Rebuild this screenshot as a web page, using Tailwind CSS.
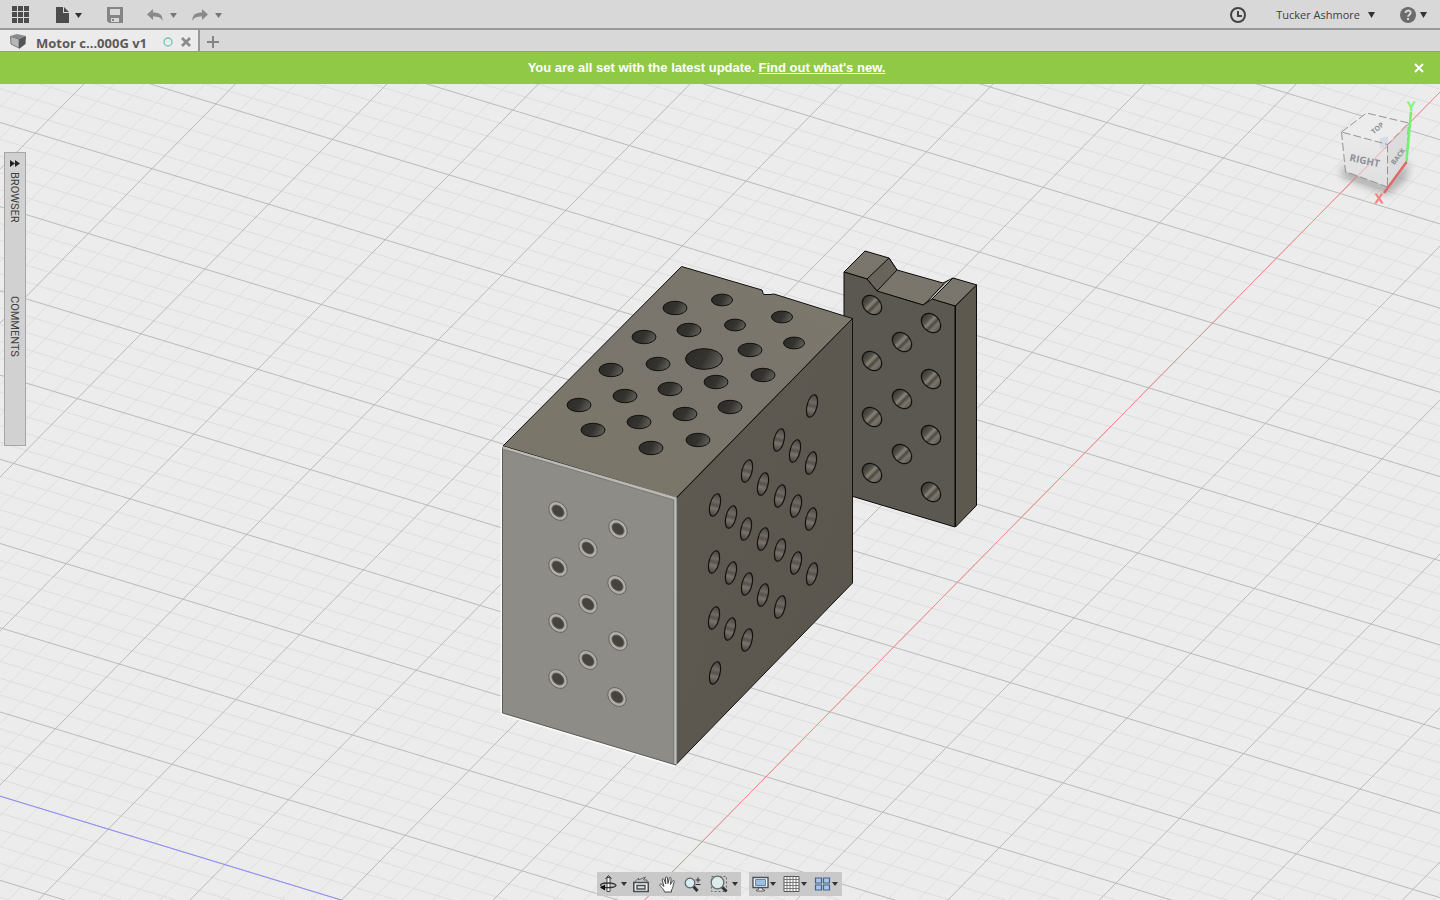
<!DOCTYPE html>
<html lang="en">
<head>
<meta charset="utf-8">
<meta name="viewport" content="width=device-width, initial-scale=1">
<title>Motor c...000G v1</title>
<script src="https://cdn.jsdelivr.net/npm/@tailwindcss/browser@4"></script>
</head>
<body class="flex h-screen flex-col overflow-hidden bg-[#ececec] font-['Open_Sans','Noto_Sans',sans-serif] text-[#404040]">

<header class="flex h-[30px] shrink-0 items-center border-b-2 border-[#999] bg-[#d8d8d8] pl-3 pr-[13px] pt-0.5">
  <button aria-label="Data panel" class="block">
    <svg width="18" height="18" fill="#4c4c4c"><path d="M0 0h5v5H0zM6 0h5v5H6zM12 0h5v5h-5zM0 6h5v5H0zM6 6h5v5H6zM12 6h5v5h-5zM0 12h5v5H0zM6 12h5v5H6zM12 12h5v5h-5z"/></svg>
  </button>
  <button aria-label="File" class="ml-[26px] flex items-center gap-[5px]">
    <svg width="14" height="16" fill="#4c4c4c"><path d="M0 0h7v6h6v10H0zM8 0l5 5H8z"/></svg>
    <svg width="7" height="5" fill="#333"><path d="M0 0h7L3.500 5z"/></svg>
  </button>
  <button aria-label="Save" class="ml-[25px] block">
    <svg width="16" height="16"><path fill="#858585" fill-rule="evenodd" d="M0 0h16v16H2l-2-2zM3 2v6h10V2zM4 11v4h8v-4z"/><path fill="#858585" d="M5 12h2v2H5z"/></svg>
  </button>
  <button aria-label="Undo" class="ml-6 flex items-center gap-[7px]">
    <svg width="16" height="12" fill="#8a8a8a"><path d="M0 5.500L6 0v3.500c6 0 10 2 9.500 8.500C14 8.500 11.500 7.500 6 7.500V11z"/></svg>
    <svg width="7" height="5" fill="#777"><path d="M0 0h7L3.500 5z"/></svg>
  </button>
  <button aria-label="Redo" class="ml-[15px] flex items-center gap-[7px]">
    <svg width="16" height="12" fill="#8a8a8a"><path d="M16 5.500L10 0v3.500C4 3.500 0 5.500.5 12 2 8.500 4.500 7.500 10 7.500V11z"/></svg>
    <svg width="7" height="5" fill="#777"><path d="M0 0h7L3.500 5z"/></svg>
  </button>
  <div class="flex-1"></div>
  <button aria-label="Job status" class="block">
    <svg width="16" height="16" fill="none" stroke="#444" stroke-width="2"><circle cx="8" cy="8" r="7"/><path d="M8 4v5h4"/></svg>
  </button>
  <button class="ml-[30px] flex items-center gap-[8px] whitespace-nowrap text-[11px] leading-4">Tucker Ashmore
    <svg width="7" height="6" fill="#333"><path d="M0 0h7L3.500 6z"/></svg>
  </button>
  <button aria-label="Help" class="ml-[25px] flex items-center gap-1">
    <svg width="16" height="16"><circle cx="8" cy="8" r="8" fill="#6c6c6c"/><path d="M5.500 6c0-3.300 5.200-3.200 5.200-.3 0 2-2.600 2-2.600 4.100" fill="none" stroke="#dcdcdc" stroke-width="1.800"/><path d="M7 11h2v2H7z" fill="#dcdcdc"/></svg>
    <svg width="7" height="6" fill="#333"><path d="M0 0h7L3.500 6z"/></svg>
  </button>
</header>

<nav aria-label="Documents" class="flex h-[22px] shrink-0 border-b border-[#999] bg-[#d8d8d8]">
  <div class="flex items-center border-r-2 border-[#999] bg-[#ebebeb] pl-[9px] pr-[7px] pt-0.5">
    <button class="flex items-center gap-[9px] whitespace-nowrap text-[13px] leading-4 font-bold text-[#5a5a5a]">
      <svg width="18" height="18"><path fill="#8b8b8b" d="M1 3l7-2 9 2-7 3z"/><path fill="#b4b8bb" stroke="#777" d="M1.500 3.500L10 6v9l-8-4z"/><path fill="#555" d="M10 6l7-3-.5 8L10 16z"/></svg>
      <span class="pt-[2px]">Motor c...000G v1</span>
    </button>
    <svg width="34" height="12" aria-hidden="true"><circle cx="21" cy="6" r="4" fill="none" stroke="#72c6b2" stroke-width="1.300"/></svg>
    <button aria-label="Close tab" class="block"><svg width="10" height="10" stroke="#8a8a8a" stroke-width="2.600"><path d="M1 1l8 8M9 1l-8 8"/></svg></button>
  </div>
  <button aria-label="New tab" class="flex w-[26px] items-center justify-center pt-0.5"><svg width="12" height="12" stroke="#848484" stroke-width="2"><path d="M6 0v12M0 6h12"/></svg></button>
</nav>

<div role="status" class="flex h-8 shrink-0 items-center bg-[#8fc945] font-['Liberation_Sans',sans-serif] text-[13px] font-bold text-white">
  <p class="flex-1 text-center">You are all set with the latest update. <a href="#" class="underline">Find out what's new.</a></p>
  <button aria-label="Dismiss" class="w-[27px]"><svg class="ml-px" width="10" height="10" stroke="#fff" stroke-width="2"><path d="M1 1l8 8M9 1l-8 8"/></svg></button>
</div>

<main class="relative min-h-0 flex-1 overflow-hidden">
  <svg class="block h-full w-full" viewBox="0 84 1440 816" preserveAspectRatio="xMidYMid slice" role="img" aria-label="3D model view">
    <defs>
      <linearGradient id="top" x1="0" y1="1" x2="1" y2="0"><stop offset="0" stop-color="#7a756a"/><stop offset=".3" stop-color="#7b766a"/><stop offset=".55" stop-color="#7a756d"/><stop offset="1" stop-color="#7c786b"/></linearGradient>
      <linearGradient id="side" x1="0" y1="0" x2="1" y2="1"><stop offset="0" stop-color="#5e5a51"/><stop offset="1" stop-color="#5a564e"/></linearGradient>
      <linearGradient id="pit" x1="0" y1="0" x2="1" y2=".3"><stop offset="0" stop-color="#2b2a27"/><stop offset=".6" stop-color="#34332f"/><stop offset="1" stop-color="#5a5953"/></linearGradient>
      <linearGradient id="slot" x1="0" y1="0" x2="0" y2="1"><stop offset="0" stop-color="#4a4740"/><stop offset=".35" stop-color="#6f6a62"/><stop offset=".5" stop-color="#57534c"/><stop offset=".65" stop-color="#79736b"/><stop offset="1" stop-color="#45423c"/></linearGradient>
      <linearGradient id="bore" x1="0" y1="0" x2="1" y2="0"><stop offset="0" stop-color="#3b3934"/><stop offset=".3" stop-color="#55524b"/><stop offset=".45" stop-color="#8a8378"/><stop offset=".6" stop-color="#4c4943"/><stop offset=".75" stop-color="#7b766c"/><stop offset="1" stop-color="#5c5850"/></linearGradient>
      <linearGradient id="cube" x1="0" y1="0" x2="0" y2="1"><stop offset="0" stop-color="#ebebec"/><stop offset="1" stop-color="#dededf"/></linearGradient>
      <filter id="soft" x="-30%" y="-30%" width="160%" height="160%"><feGaussianBlur stdDeviation="4"/></filter>
    </defs>

    <g id="minor" stroke="#dedede"></g>
    <g id="major" stroke="#bababa"></g>
    <path id="zaxis" stroke="#8e8eff" fill="none"/>
    <path id="xaxis" stroke="#f98a8a" fill="none"/>

    <!-- rear plate -->
    <g stroke="#0b0b0a" stroke-linejoin="round">
      <path fill="url(#top)" d="M844 272l21-21 24 7 8 12 46 13 10-5 24 7-22 21-24-7-8 6-47-14-9-12z"/>
      <path fill="#68645b" d="M867 279l22-21 8 12-20 21z"/>
      <path fill="#c5c7c2" stroke="none" d="M924 305l22-22 7-5-21 21z"/>
      <path fill="none" d="M924 305l20-21.500M932 299l21-21"/>
      <path fill="#5a5851" d="M844 272l23 7 10 12 46 14 9-6 23 7v221l-102-30.500-9-3z"/>
      <path fill="#5d594f" d="M955.500 306L976.500 285v220.500l-21 21.500z"/>
    </g>
    <g id="plateHoles" fill="url(#bore)" stroke="#11110f" stroke-width="1.200"></g>

    <!-- main block -->
    <path fill="url(#top)" stroke="#11110f" d="M503 446L681.500 266.500 762 290l1.500 4.500H770l4-.5 78.500 24.500L676 498z"/>
    <path fill="url(#side)" stroke="#11110f" d="M676.500 498L852.500 318.500V583L676.500 764z"/>
    <path fill="none" stroke="#fafafa" stroke-width="2" d="M501.500 447v267L675 766"/>
    <path fill="#8d8c87" stroke="#5d5c58" d="M502.500 447.500L676 498.500V765L502.500 713z"/>
    <path fill="none" stroke="#b9b9b6" stroke-width="2.500" d="M503 447.500L675.500 498.500V764"/>
    <path fill="none" stroke="#777671" stroke-width=".7" d="M504 449.500L673.500 500V763"/>
    <g id="topHoles" fill="url(#pit)" stroke="#11110f"></g>
    <g id="sideHoles" fill="url(#slot)" stroke="#11110f" stroke-width="1.200"></g>
    <g id="frontHoles"></g>

    <!-- view cube -->
    <g>
      <path d="M1343 166l44 20 22-26-3 18-18 16-46-18z" fill="#777" opacity=".65" filter="url(#soft)"/>
      <path fill="#ececed" d="M1341.500 132l25-19 42 10-21 21.500z"/>
      <path fill="url(#cube)" d="M1341.500 132l46 12.500V187l-42-15.500z"/>
      <path fill="#dcdcde" d="M1387.500 144.500l21-21.500-2 39-19 25z"/>
      <path fill="#d8dae4" d="M1380 138l8-1.500v13.500l-8-2z"/>
      <path fill="none" stroke="#939393" stroke-dasharray="8 3" d="M1341.500 132l25-19 42 10-21 21.500zM1341.500 132l4 39.500 42 15.500 19-25 2-39M1387.500 144.500V187"/>
      <g font-family="Open Sans, sans-serif" font-weight="700" fill="#8d9095" text-anchor="middle">
        <text font-size="10" transform="translate(1364 164) rotate(12)">RIGHT</text>
        <text font-size="7" transform="translate(1400 158) rotate(-52)">BACK</text>
        <text font-size="7" transform="translate(1379 130) rotate(-40)">TOP</text>
      </g>
      <path stroke="#fa8c8c" stroke-opacity=".7" d="M1341.500 192.400L1409 123.500"/>
      <path stroke="#e06a6a" stroke-width="2.500" d="M1406.500 162L1384 193"/>
      <path stroke="#6ff46c" stroke-width="2.500" d="M1406.500 161L1411 112"/>
      <g font-family="Liberation Sans, sans-serif" font-size="12" text-anchor="middle" stroke-width="1">
        <text x="1411" y="111" fill="#80f57e" stroke="#80f57e">Y</text>
        <text x="1379" y="203" fill="#f68484" stroke="#f68484">X</text>
      </g>
    </g>
  </svg>

  <!-- collapsed side palette -->
  <aside class="absolute left-1 top-[68px] flex h-[294px] w-[22px] flex-col items-center border border-[#a6a6a6] bg-[#d1d1d1] font-['Roboto',sans-serif] text-[11px] leading-[18px]">
    <button aria-label="Expand" class="mt-[7px] block"><svg width="10" height="7" fill="#222"><path d="M0 0l5 3.500L0 7zM5 0l5 3.500L5 7z"/></svg></button>
    <button class="mt-[5px] h-[124px] pr-0.5 text-left [writing-mode:vertical-rl]">BROWSER</button>
    <button class="pr-0.5 text-left [writing-mode:vertical-rl]">COMMENTS</button>
  </aside>

  <!-- navigation and display bars -->
  <div class="absolute inset-x-0 bottom-1 flex justify-center gap-2 pr-0.5">
    <div role="toolbar" aria-label="Navigation" class="flex h-6 items-center bg-[#c9c9c9] px-[3px]">
      <button aria-label="Orbit" class="flex items-center gap-1">
        <svg width="17" height="18" fill="none" stroke="#222"><path d="M7 2.500h3v14H7z" fill="#fff" stroke="#444"/><path d="M5.500 4L8.500.5l3 3.500" stroke="#333"/><path d="M5 12.500c14 .5 14-4.500 3-4.500-7 0-9 2-6 3.500" stroke="#333" stroke-width="1.300"/><path d="M0 12.500l5-3v6z" fill="#111" stroke="none"/></svg>
        <svg width="6" height="4" fill="#333"><path d="M0 0h6L3 4z"/></svg>
      </button>
      <button aria-label="Look at" class="ml-[6px] block">
        <svg width="16" height="17" fill="none" stroke="#4a4d52"><path d="M.8 15.500v-9h14.500v9z" fill="#eef0f2" stroke-width="1.600"/><path d="M4 9.500h8v3.500H4z" fill="#dfe1e4" stroke-width="1.400"/><path d="M1.500 6l4-4v2l7-3-2 3h3.500v2" stroke="#666"/></svg>
      </button>
      <button aria-label="Pan" class="ml-[10px] block">
        <svg width="17" height="17"><path d="M5.500 16c-.5-2.500-2.500-4-4.500-6.500-.8-1.200.8-2 2-.8L5 10.500 3.200 4c-.3-1.500 1.400-1.800 1.900-.5L6.800 8 6.500 2c0-1.500 1.900-1.500 2 0L9 7.500l1.300-5.300c.4-1.400 2-1 1.800.5L11.500 8.500l2-3.500c.8-1.200 2.200-.5 1.700.8C14 9 14 12.500 12.500 14v2z" fill="#fff" stroke="#4a4a4a"/></svg>
      </button>
      <button aria-label="Zoom" class="ml-[8px] block">
        <svg width="17" height="17" fill="none"><path d="M9.500 10.500l4 4.500" stroke="#333" stroke-width="3"/><circle cx="6" cy="7" r="4.800" fill="#d7eaf0" stroke="#5a6165" stroke-width="1.200"/><path d="M11.500 4h5M14 1.500v5M11.500 8.500h5" stroke="#333"/></svg>
      </button>
      <button aria-label="Fit" class="ml-[9px] flex items-center gap-1">
        <svg width="18" height="18" fill="none"><path d="M1.500 1.500h15v15h-15z" stroke="#666" stroke-dasharray="2 2"/><path d="M11.500 11.500l5 5" stroke="#333" stroke-width="3"/><circle cx="7.500" cy="7.500" r="6.300" fill="#dcecea" stroke="#666e70" stroke-width="1.300"/></svg>
        <svg width="6" height="4" fill="#333"><path d="M0 0h6L3 4z"/></svg>
      </button>
    </div>
    <div role="toolbar" aria-label="Display" class="flex h-6 items-center gap-[7px] bg-[#c9c9c9] pl-[3px] pr-[4px]">
      <button aria-label="Display settings" class="flex items-center gap-px">
        <svg width="17" height="16" fill="none"><path d="M1 1.500h15v10H1z" fill="#fff" stroke="#4b5158" stroke-width="1.400"/><path d="M3.500 3.500h10v6h-10z" fill="#9dbfe4" stroke="#5e84b0"/><path d="M6.500 12h4v1.500l2 .5v1h-8v-1l2-.5z" fill="#eee" stroke="#444" stroke-width=".8"/></svg>
        <svg width="6" height="4" fill="#333"><path d="M0 0h6L3 4z"/></svg>
      </button>
      <button aria-label="Grid and snaps" class="flex items-center gap-px">
        <svg width="17" height="16" fill="none"><path d="M1 .5h15v15H1z" fill="#fff" stroke="#555"/><path d="M4 .5v15M7 .5v15M10 .5v15M13 .5v15M1 3.500h15M1 6.500h15M1 9.500h15M1 12.500h15" stroke="#777"/></svg>
        <svg width="6" height="4" fill="#333"><path d="M0 0h6L3 4z"/></svg>
      </button>
      <button aria-label="Viewports" class="flex items-center gap-px">
        <svg width="17" height="16" fill="#a9c6e6" stroke="#41638e" stroke-width="1.200"><path d="M1.500 2h6v5h-6zM9.500 2h6v5h-6zM1.500 9h6v5h-6zM9.500 9h6v5h-6z"/></svg>
        <svg width="6" height="4" fill="#333"><path d="M0 0h6L3 4z"/></svg>
      </button>
    </div>
  </div>
</main>

<script>
  // Ground grid: node (i, j) = origin + i*U + j*V, five minor cells per major cell.
  const O = [152, 168.7], U = [116.62, 35.5], V = [63.78, -64.8];
  const node = (i, j) => (O[0] + i * U[0] + j * V[0]).toFixed(1) + ' ' + (O[1] + i * U[1] + j * V[1]).toFixed(1);
  const seg = (a, b) => 'M' + a + 'L' + b;
  const byId = id => document.getElementById(id);
  let minor = '', major = '';
  for (let k = -125; k <= 125; k++) {
    const t = k / 5;
    const d = seg(node(t, -25), node(t, 25)) + seg(node(-25, t), node(25, t));
    if (k % 5) minor += d; else major += d;
  }
  byId('minor').innerHTML = '<path d="' + minor + '"/>';
  byId('major').innerHTML = '<path d="' + major + '"/>';
  byId('zaxis').setAttribute('d', seg(node(-10, -8), node(8, -8)));
  byId('xaxis').setAttribute('d', seg(node(8, -8), node(8, 20)));

  const ellipse = (x, y, rx, ry, rot, extra) =>
    `<ellipse rx="${rx}" ry="${ry}" transform="translate(${x} ${y}) rotate(${rot})" ${extra || ''}/>`;

  byId('topHoles').innerHTML = [
    [675,308],[722,300,10.5],[782,317,10.5],[644,337],[689,330],[735,325,10.5],[794,343,10.5],[750,350],
    [611,370],[658,364],[704,359,18.5],[763,375],[579,405],[625,396],[670,389],[716,382],
    [593,430],[639,422],[685,414],[730,407],[651,448],[698,440]
  ].map(([x, y, r = 12]) => ellipse(x, y, r, r * 0.56, 0)).join('');

  byId('sideHoles').innerHTML = [
    [812,406],[779,440],[795,451],[811,463],[747,471],[763,484],[780,496],[796,506],[811,519],
    [715,505],[731,517],[746,529],[763,539],[780,550],[796,563],[812,574],
    [714,562],[731,573],[747,584],[763,595],[780,607],[714,618],[730,629],[747,640],[715,673]
  ].map(([x, y]) => ellipse(x, y, 5, 11.5, 14)).join('');

  byId('frontHoles').innerHTML = [
    [558,511],[618,529],[588,548],[558,567],[617,585],[588,604],[558,623],[618,641],[588,660],[558,679],[617,697]
  ].map(([x, y]) =>
    ellipse(x, y, 10.5, 8, 48, 'fill="#b0afac" stroke="#5c5b57" stroke-width=".8"') +
    ellipse(x, y, 7, 5, 44, 'fill="#46433c" stroke="#6c6a64" stroke-width=".8"')).join('');

  byId('plateHoles').innerHTML = [
    [872,305],[931,323],[902,342],[872,361],[931,379],[902,399],[872,417],[931,435],[902,454],[872,473],[931,492]
  ].map(([x, y]) => ellipse(x, y, 10.8, 8.4, 45)).join('');
</script>
</body>
</html>
